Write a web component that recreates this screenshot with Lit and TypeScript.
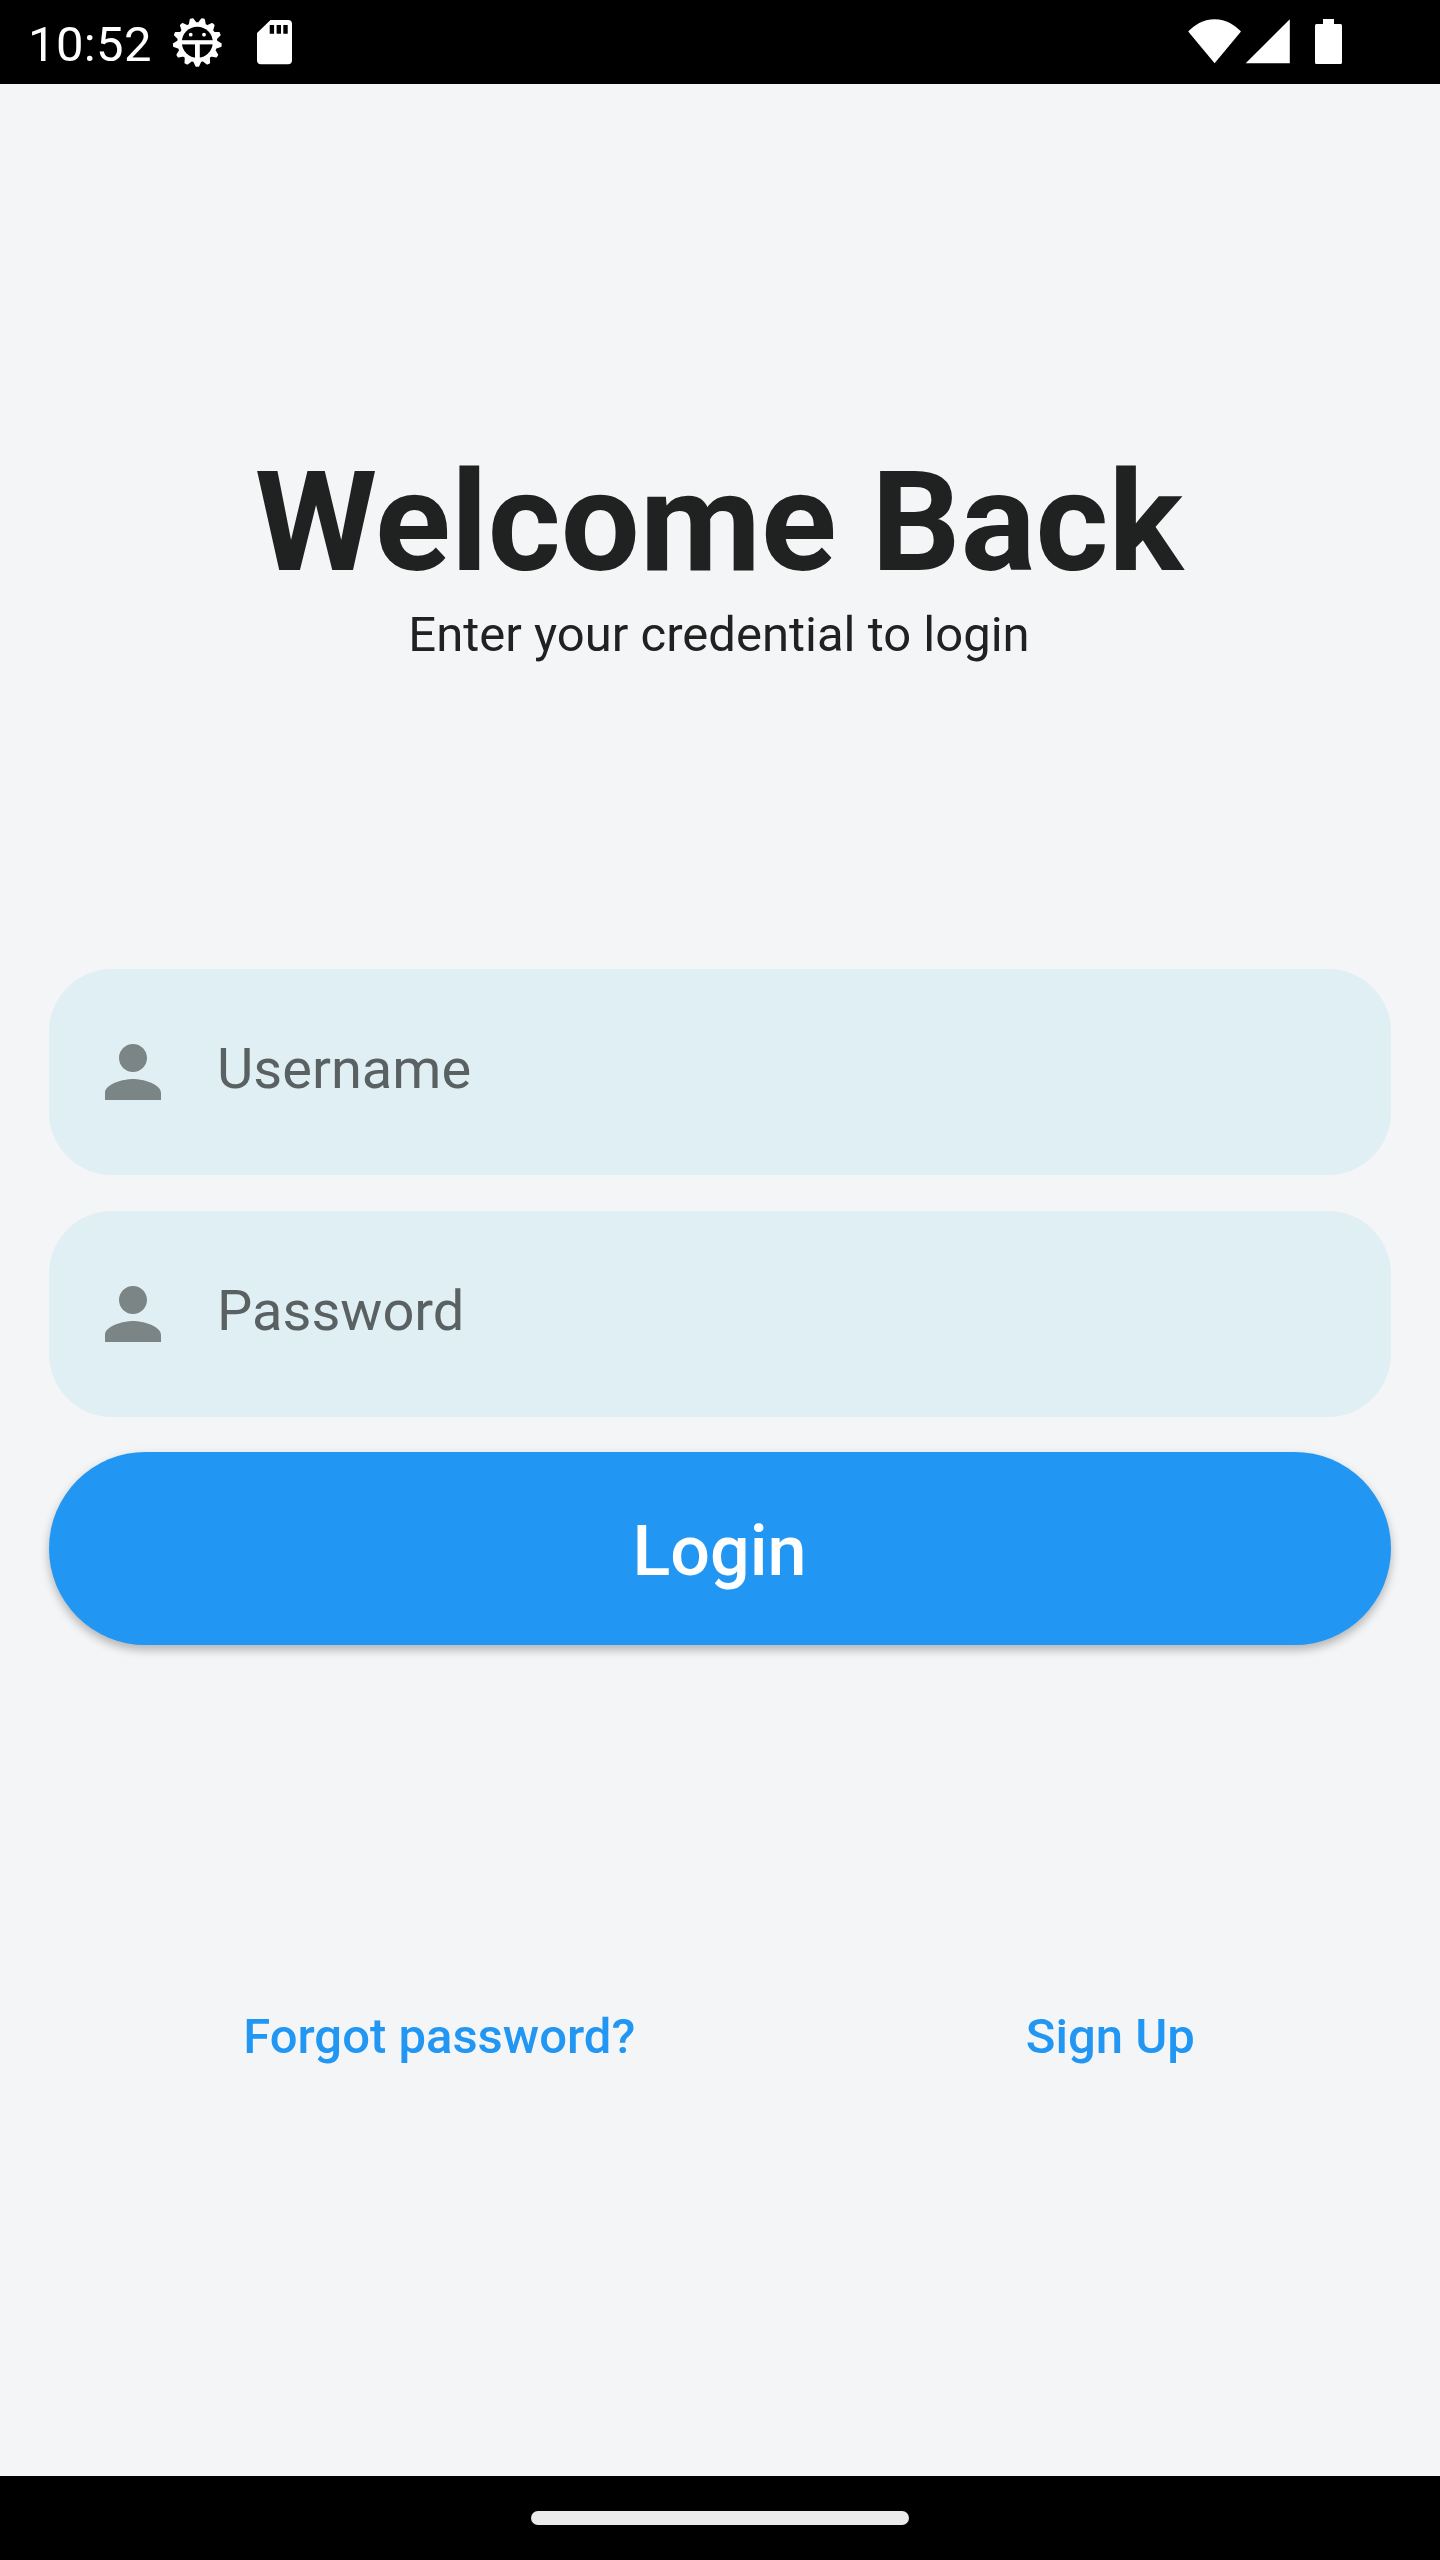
import { LitElement, html, css, svg } from "lit";
import { customElement, property } from "lit/decorators.js";

/* Outline of the serrated ring used by the debugging indicator. */
const gearPoints = (cx: number, cy: number, teeth: number, outer: number, inner: number): string => {
  const step = (Math.PI * 2) / teeth;
  const points: string[] = [];
  for (let i = 0; i < teeth; i++) {
    const mid = Math.PI / 2 + i * step;
    const add = (r: number, a: number) =>
      points.push(`${(cx + r * Math.cos(a)).toFixed(2)},${(cy + r * Math.sin(a)).toFixed(2)}`);
    add(inner, mid - step * 0.36);
    add(outer, mid - step * 0.1);
    add(outer, mid + step * 0.1);
    add(inner, mid + step * 0.36);
  }
  return points.join(" ");
};

@customElement("status-bar")
export class StatusBar extends LitElement {
  static styles = css`
    :host {
      display: flex;
      justify-content: space-between;
      height: 84px;
      background: #000;
      color: #fff;
      font: 400 49px/60px Roboto, sans-serif;
    }
    .side {
      display: flex;
    }
    .time {
      width: 141px;
      padding: 15px 0 0 28px;
      letter-spacing: 0.35px;
      white-space: nowrap;
    }
    svg {
      display: block;
      fill: #fff;
    }
  `;

  render() {
    return html`
      <div class="side">
        <div class="time">10:52</div>
        <svg width="131" height="84" viewBox="169 0 131 84">
          <polygon points=${gearPoints(197.3, 42.3, 13, 23.7, 19.2)} stroke="#fff" stroke-width="1.6" stroke-linejoin="round"></polygon>
          <circle cx="197.3" cy="42.3" r="15.5" fill="#000"></circle>
          <rect x="181" y="40.2" width="33" height="4.2"></rect>
          <rect x="195" y="42" width="4.8" height="17"></rect>
          <circle cx="190.7" cy="34.7" r="1.9"></circle>
          <circle cx="204" cy="34.7" r="1.9"></circle>
          <path
            fill-rule="evenodd"
            d="M270.5 20H288a4 4 0 0 1 4 4v36.3a4 4 0 0 1-4 4H261a4 4 0 0 1-4-4V33ZM269.7 25v8.7h4.4V25ZM276.6 25v8.7h4.4V25ZM283.3 25v8.7h4.4V25Z"
          ></path>
        </svg>
      </div>
      <svg width="270" height="84" viewBox="1170 0 270 84">
        <path d="M1188.2 31.4C1194 25.5 1203 19.3 1214.6 19.3S1235 25.5 1241 31.4L1214.6 63.3Z"></path>
        <path d="M1245.7 63.3H1289.8V19.3Z"></path>
        <path d="M1323 19h11v5h6.5a1.5 1.5 0 0 1 1.5 1.5v37a1.5 1.5 0 0 1-1.5 1.5h-24a1.5 1.5 0 0 1-1.5-1.5v-37a1.5 1.5 0 0 1 1.5-1.5h6.5Z"></path>
      </svg>
    `;
  }
}

@customElement("login-field")
export class LoginField extends LitElement {
  @property() label = "";

  static styles = css`
    :host {
      display: flex;
      align-items: center;
      box-sizing: border-box;
      height: 206px;
      padding-left: 42px;
      gap: 42px;
      border-radius: 63px;
      background: #e0eff4;
    }
    .icon {
      width: 84px;
      height: 84px;
      fill: #7c8585;
    }
    .label {
      padding-bottom: 6px;
      color: #5a6162;
      font: 400 56px/66px Roboto, sans-serif;
    }
  `;

  render() {
    return html`
      <svg class="icon" viewBox="0 0 24 24">
        ${svg`<path d="M12 12c2.21 0 4-1.79 4-4s-1.79-4-4-4-4 1.79-4 4 1.79 4 4 4zm0 2c-2.67 0-8 1.34-8 4v2h16v-2c0-2.66-5.33-4-8-4z"></path>`}
      </svg>
      <span class="label">${this.label}</span>
    `;
  }
}

@customElement("app-root")
export class AppRoot extends LitElement {
  static styles = css`
    :host {
      display: flex;
      flex-direction: column;
      width: 1440px;
      height: 2560px;
      background: #f3f5f7;
      font-family: Roboto, sans-serif;
    }
    .content {
      flex: 1;
      box-sizing: border-box;
      padding: 356px 49px 0;
    }
    .heading {
      padding-right: 2px;
      text-align: center;
      color: #202221;
    }
    .title {
      margin: 0;
      font-size: 140px;
      line-height: 164px;
      font-weight: 700;
    }
    .subtitle {
      margin: 1px 0 0;
      font-size: 49px;
      line-height: 60px;
    }
    .form {
      display: flex;
      flex-direction: column;
      gap: 36px;
      margin-top: 304px;
    }
    .submit {
      box-sizing: border-box;
      height: 192.6px;
      margin: -1px 0 0;
      padding: 5px 1px 0 0;
      border: 0;
      border-radius: 97px;
      background: #2196f3;
      color: #fff;
      font: 500 70px/82px Roboto, sans-serif;
      box-shadow: 0 5px 8px rgba(0, 0, 0, 0.21), 0 4px 14px rgba(0, 0, 0, 0.07);
    }
    .links {
      display: flex;
      justify-content: space-around;
      margin: 362.4px 1px 0 -1px;
      color: #2196f3;
      font-size: 49px;
      line-height: 60px;
      font-weight: 500;
    }
    .nav {
      display: flex;
      justify-content: center;
      box-sizing: border-box;
      height: 84px;
      padding-top: 35px;
      background: #000;
    }
    .handle {
      width: 378px;
      height: 14px;
      border-radius: 7px;
      background: #ebebeb;
    }
  `;

  render() {
    return html`
      <status-bar></status-bar>
      <main class="content">
        <header class="heading">
          <h1 class="title">Welcome Back</h1>
          <p class="subtitle">Enter your credential to login</p>
        </header>
        <div class="form">
          <login-field label="Username"></login-field>
          <login-field label="Password"></login-field>
          <button class="submit">Login</button>
        </div>
        <div class="links">
          <span>Forgot password?</span>
          <span>Sign Up</span>
        </div>
      </main>
      <footer class="nav"><div class="handle"></div></footer>
    `;
  }
}
